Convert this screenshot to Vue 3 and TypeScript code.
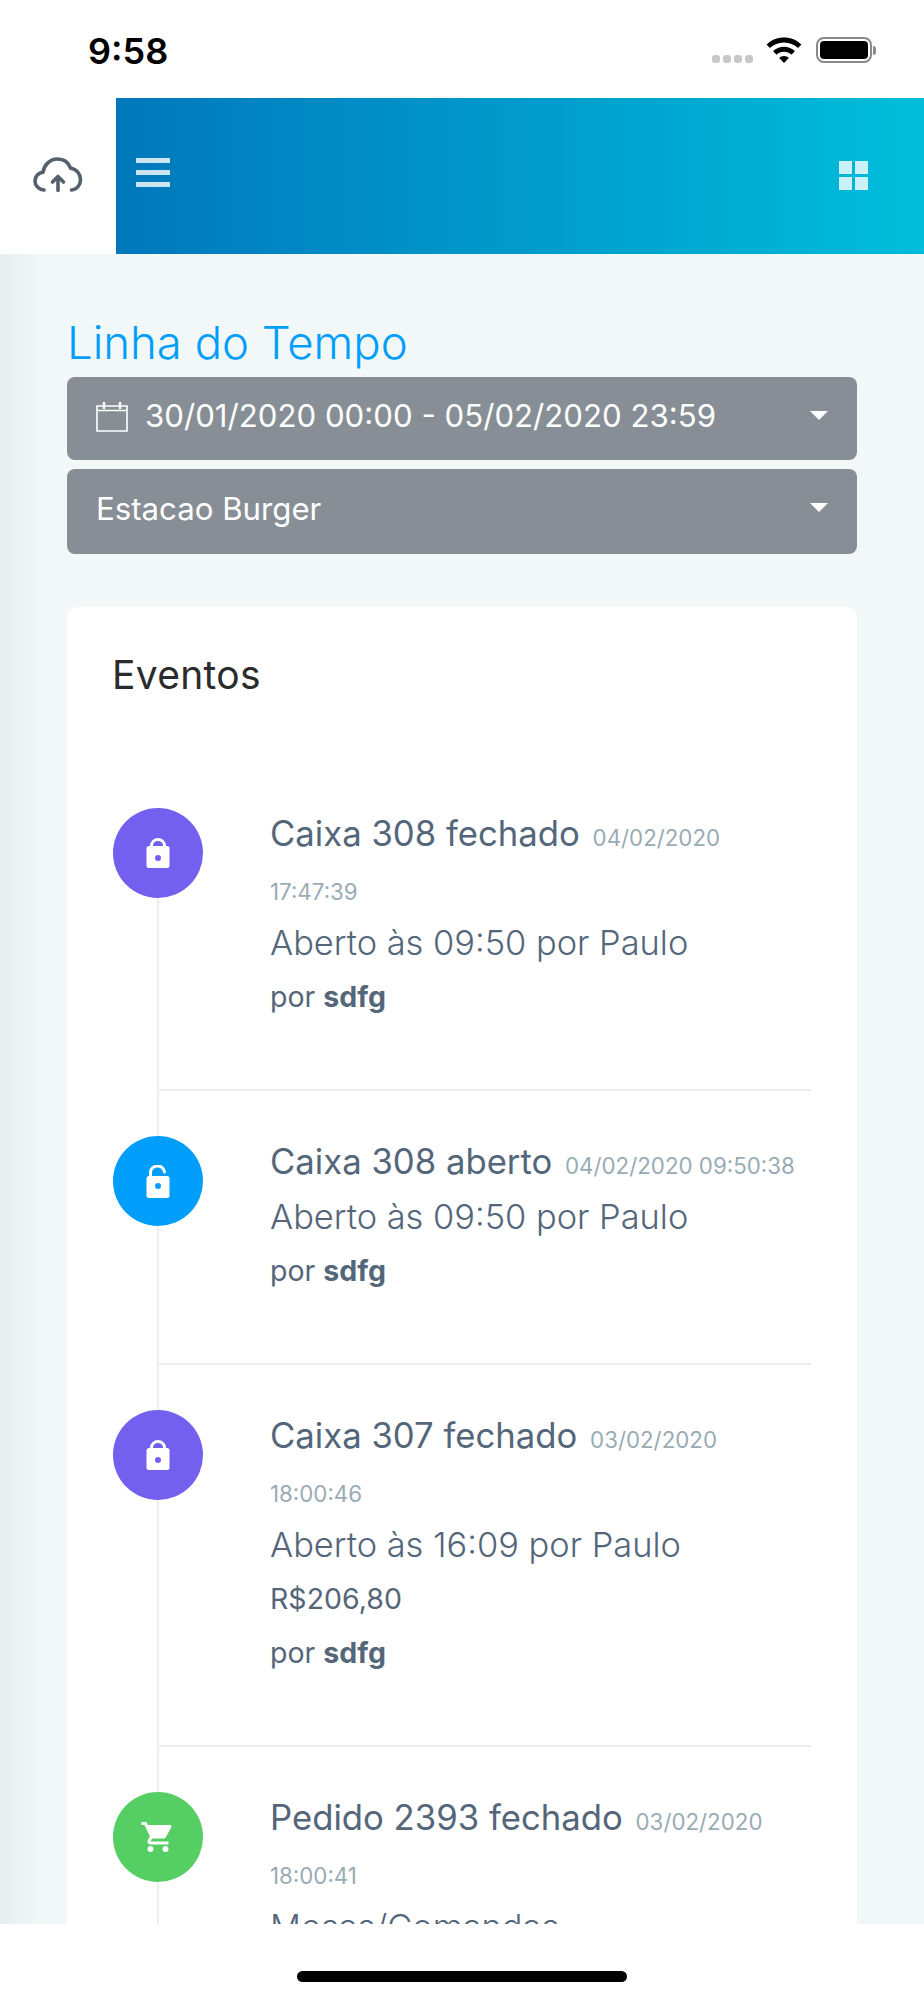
<template>
  <div class="tela">
    <div class="status">
      <span class="hora">9:58</span>
      <div class="status-icons">
        <div class="sinal"><i v-for="n in 4" :key="n"></i></div>
        <svg class="wifi" viewBox="0 0 36 26" width="36" height="26">
          <path d="M18 0.500C11.200 0.500 5.200 3.200 0.600 7.400L3.900 11C7.600 7.600 12.600 5.500 18 5.500s10.400 2.100 14.100 5.500l3.300-3.600C30.800 3.200 24.800 0.500 18 0.500z" />
          <path d="M18 9.800c-4.200 0-8 1.600-10.900 4.300l3.300 3.600c2-1.900 4.700-3 7.600-3s5.600 1.100 7.600 3l3.300-3.600C26 11.400 22.200 9.800 18 9.800z" />
          <path d="M18 19c-1.900 0-3.500 0.700-4.800 1.900L18 26l4.800-5.100C21.500 19.700 19.900 19 18 19z" />
        </svg>
        <div class="bateria"><b></b></div>
        <span class="bateria-ponta"></span>
      </div>
    </div>

    <header class="topo">
      <div class="topo-logo">
        <svg viewBox="0 0 50 36" width="50" height="36" fill="none" stroke="#54616c" stroke-width="3.600" stroke-linecap="round" stroke-linejoin="round">
          <path d="M11 33C5.500 32.500 2 28.500 2 24c0-4.600 3.400-8.300 8-8.800C11 8 17 2 24.500 2c6 0 11 3.500 13.200 9.300C43.500 12 47.500 17 47.500 22.500c0 5.500-3.500 10-9 10.500" />
          <path d="M25 33.500V19.500M19.500 25l5.500-5.500 5.500 5.500" />
        </svg>
      </div>
      <div class="topo-barra">
        <div class="hamburguer"><i></i><i></i><i></i></div>
        <div class="grade"><i v-for="n in 4" :key="n"></i></div>
      </div>
    </header>

    <main class="conteudo">
      <h1>Linha do Tempo</h1>
      <div class="filtro filtro-data">
        <svg class="calendario" viewBox="0 0 32 31" width="32" height="31" fill="none" stroke="#fff" stroke-width="1.600">
          <path d="M1 5h30v25H1zM1 9.500h30" />
          <path d="M8 1v7M24 1v7" stroke-width="2.400" />
        </svg>
        <span>30/01/2020 00:00 - 05/02/2020 23:59</span>
        <svg class="seta" viewBox="0 0 18 9" width="18" height="9"><path d="M0 0h18l-9 9z" fill="#fff" /></svg>
      </div>
      <div class="filtro filtro-loja">
        <span>Estacao Burger</span>
        <svg class="seta" viewBox="0 0 18 9" width="18" height="9"><path d="M0 0h18l-9 9z" fill="#fff" /></svg>
      </div>

      <section class="cartao">
        <h2>Eventos</h2>
        <ul class="linha">
          <li v-for="ev in eventos" :key="ev.titulo" class="evento">
            <div class="bolinha" :class="ev.cor">
              <svg v-if="ev.icone === 'fechado'" viewBox="0 0 24 30" width="24" height="30">
                <path d="M5.500 10V7.500a6.500 6 0 0 1 13 0V10" fill="none" stroke="#fff" stroke-width="3" />
                <rect x="0.500" y="8" width="23" height="22" rx="2.500" fill="#fff" />
                <circle cx="12" cy="20" r="3" fill="#7460ee" />
              </svg>
              <svg v-else-if="ev.icone === 'aberto'" viewBox="0 0 24 33" width="24" height="33">
                <path d="M4.500 12V8a7 6.500 0 0 1 14 -1" fill="none" stroke="#fff" stroke-width="3" stroke-linecap="round" />
                <rect x="0.500" y="11" width="23" height="22" rx="2.500" fill="#fff" />
                <circle cx="12" cy="21" r="3" fill="#009efb" />
              </svg>
              <svg v-else viewBox="0 0 24 24" width="36" height="36">
                <path fill="#fff" d="M17,18C15.890,18 15,18.890 15,20A2,2 0 0,0 17,22A2,2 0 0,0 19,20C19,18.890 18.100,18 17,18M1,2V4H3L6.600,11.590L5.240,14.040C5.090,14.320 5,14.650 5,15A2,2 0 0,0 7,17H19V15H7.420A0.250,0.250 0 0,1 7.170,14.750C7.170,14.700 7.180,14.660 7.200,14.630L8.100,13H15.550C16.300,13 16.960,12.580 17.300,11.970L20.880,5.500C20.950,5.340 21,5.170 21,5A1,1 0 0,0 20,4H5.210L4.270,2M7,18C5.890,18 5,18.890 5,20A2,2 0 0,0 7,22A2,2 0 0,0 9,20C9,18.890 8.100,18 7,18Z" />
              </svg>
            </div>
            <div class="evento-corpo">
              <div class="evento-titulo">{{ ev.titulo }} <small>{{ ev.data }}</small></div>
              <div class="evento-texto">{{ ev.texto }}</div>
              <div v-if="ev.valor" class="evento-info">{{ ev.valor }}</div>
              <div v-if="ev.autor" class="evento-info">por <strong>{{ ev.autor }}</strong></div>
            </div>
          </li>
        </ul>
      </section>
    </main>

    <div class="rodape"><span></span></div>
  </div>
</template>

<script setup lang="ts">
interface Evento {
  titulo: string
  data: string
  texto: string
  valor?: string
  autor?: string
  cor: string
  icone: string
}

const eventos: Evento[] = [
  { titulo: 'Caixa 308 fechado', data: '04/02/2020 17:47:39', texto: 'Aberto às 09:50 por Paulo', autor: 'sdfg', cor: 'roxo', icone: 'fechado' },
  { titulo: 'Caixa 308 aberto', data: '04/02/2020 09:50:38', texto: 'Aberto às 09:50 por Paulo', autor: 'sdfg', cor: 'azul', icone: 'aberto' },
  { titulo: 'Caixa 307 fechado', data: '03/02/2020 18:00:46', texto: 'Aberto às 16:09 por Paulo', valor: 'R$206,80', autor: 'sdfg', cor: 'roxo', icone: 'fechado' },
  { titulo: 'Pedido 2393 fechado', data: '03/02/2020 18:00:41', texto: 'Mesas/Comandas', cor: 'verde', icone: 'carrinho' },
]
</script>

<style scoped>
.tela {
  height: 2000px;
  display: flex;
  flex-direction: column;
  overflow: hidden;
  background: #fff;
  font-family: Inter, "Liberation Sans", sans-serif;
}
.status {
  height: 98px;
  flex: none;
  display: flex;
  justify-content: space-between;
  padding: 0 48px 0 88px;
}
.hora {
  font-size: 36px;
  font-weight: 600;
  line-height: 44px;
  margin-top: 29px;
  color: #000;
}
.status-icons {
  display: flex;
  align-items: flex-start;
  padding-top: 37px;
}
.sinal {
  display: flex;
  gap: 3px;
  margin: 18px 13px 0 0;
}
.sinal i {
  width: 8px;
  height: 8px;
  border-radius: 3px;
  background: #c8c8c8;
}
.wifi {
  fill: #000;
  margin-right: 14px;
}
.bateria {
  width: 56px;
  height: 26px;
  box-sizing: border-box;
  border: 2px solid #8a8a8a;
  border-radius: 8px;
  padding: 2px;
}
.bateria b {
  display: block;
  height: 100%;
  background: #000;
  border-radius: 4px;
}
.bateria-ponta {
  width: 3px;
  height: 9px;
  margin: 9px 0 0 1px;
  background: #8a8a8a;
  border-radius: 0 3px 3px 0;
}
.topo {
  height: 156px;
  flex: none;
  display: flex;
}
.topo-logo {
  width: 116px;
  flex: none;
  padding: 59px 0 0 33px;
  box-sizing: border-box;
  background: #fff;
}
.topo-barra {
  flex: 1;
  display: flex;
  justify-content: space-between;
  padding: 60px 56px 0 20px;
  background: linear-gradient(to right, #0178bc 0%, #00bdda 100%);
}
.hamburguer {
  width: 34px;
  display: flex;
  flex-direction: column;
  gap: 7px;
}
.hamburguer i {
  height: 5px;
  background: rgba(255, 255, 255, 0.8);
}
.grade {
  width: 29px;
  height: 29px;
  margin-top: 3px;
  display: grid;
  grid-template-columns: 1fr 1fr;
  gap: 3px;
}
.grade i {
  background: rgba(255, 255, 255, 0.8);
}
.conteudo {
  flex: 1;
  min-height: 0;
  overflow: hidden;
  padding: 60px 67px 0;
  background: linear-gradient(to right, #e8edee 0, #f2f7f8 40px);
}
h1 {
  margin: 0 0 6px;
  font-size: 45.500px;
  line-height: 57px;
  font-weight: 300;
  color: #009efb;
}
.filtro {
  display: flex;
  align-items: center;
  box-sizing: border-box;
  background: #878e95;
  border-radius: 8px;
  color: #fff;
  font-size: 31.200px;
  position: relative;
}
.filtro span {
  margin-top: -5px;
}
.filtro-data {
  height: 83px;
  padding-left: 29px;
  gap: 17px;
  margin-bottom: 9px;
}
.filtro-loja {
  height: 85px;
  padding-left: 29px;
}
.calendario {
  margin-top: -5px;
}
.seta {
  position: absolute;
  right: 29px;
  top: 34px;
}
.cartao {
  margin-top: 53px;
  background: #fff;
  border-radius: 10px;
  padding: 45px 46px 0;
}
h2 {
  margin: 0 0 110px -1px;
  font-size: 39px;
  line-height: 46px;
  font-weight: 400;
  letter-spacing: 0.300px;
  color: #2b2b2b;
}
.linha {
  list-style: none;
  margin: 0 0 0 44px;
  padding: 0;
  border-left: 2px solid #eeeeee;
}
.evento {
  display: flex;
  padding-top: 45px;
  margin-left: -2px;
  border-bottom: 2px solid #eeeeee;
}
.evento:first-child {
  padding-top: 0;
}
.bolinha {
  width: 90px;
  height: 90px;
  flex: none;
  margin-left: -44px;
  margin-right: 67px;
  border-radius: 50%;
  display: flex;
  align-items: center;
  justify-content: center;
}
.roxo { background: #7460ee; }
.azul { background: #009efb; }
.verde { background: #55ce63; }
.evento-corpo {
  flex: 1;
  min-width: 0;
  padding-bottom: 65px;
  color: #54667a;
}
.evento-titulo {
  font-size: 34.700px;
  line-height: 54px;
  margin: -2px 0 2px;
}
.evento-titulo small {
  font-size: 22.300px;
  line-height: 1;
  color: #99abb4;
  margin-left: 3px;
}
.evento-texto {
  font-size: 34.400px;
  line-height: 54px;
  font-weight: 300;
}
.evento-info {
  font-size: 28.500px;
  line-height: 54px;
}
.evento-info strong {
  font-weight: 700;
}
.rodape {
  height: 76px;
  flex: none;
  background: #fff;
  display: flex;
  justify-content: center;
  padding-top: 47px;
  box-sizing: border-box;
}
.rodape span {
  width: 330px;
  height: 11px;
  border-radius: 6px;
  background: #000;
}
</style>

<style>
html, body {
  margin: 0;
  background: #fff;
}
</style>
